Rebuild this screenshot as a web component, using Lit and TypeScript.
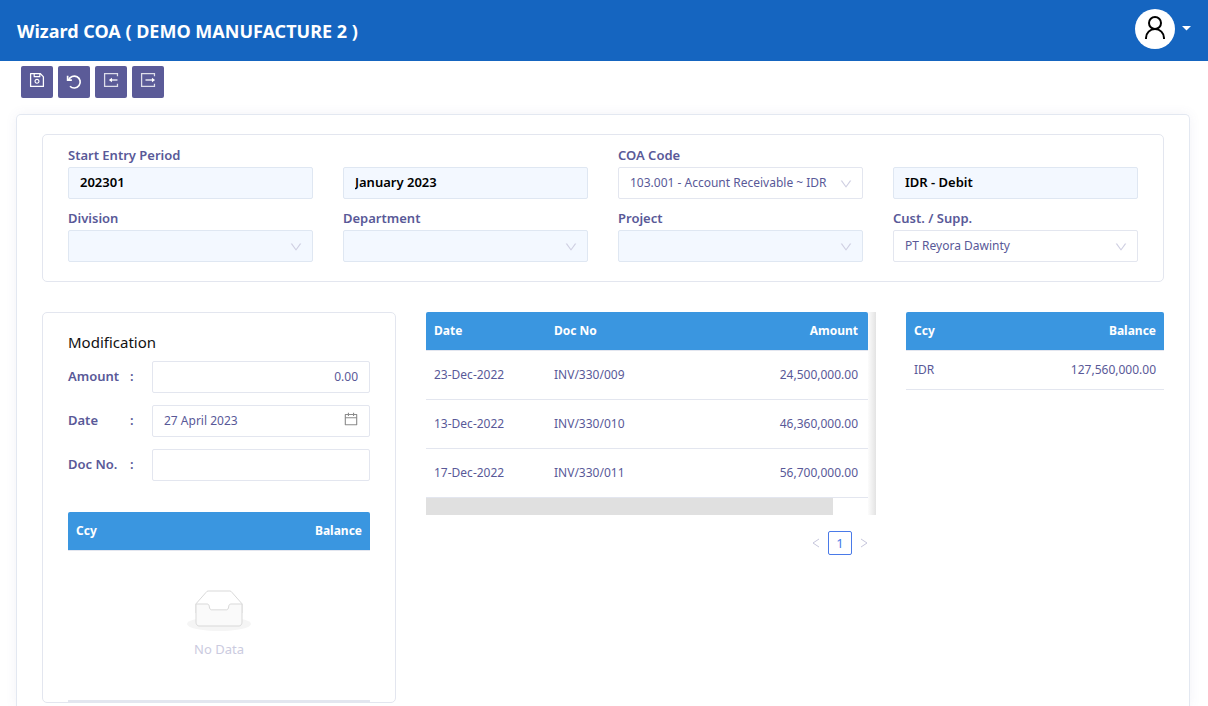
import { LitElement, html, css, svg } from "lit";
import { customElement } from "lit/decorators.js";

interface Field {
  id: string;
  label?: string;
  kind: "text" | "select";
  value: string;
  disabled?: boolean;
}

const fields: Field[] = [
  { id: "period", label: "Start Entry Period", kind: "text", value: "202301", disabled: true },
  { id: "period-name", kind: "text", value: "January 2023", disabled: true },
  { id: "coa", label: "COA Code", kind: "select", value: "103.001 - Account Receivable ~ IDR" },
  { id: "currency", kind: "text", value: "IDR - Debit", disabled: true },
  { id: "division", label: "Division", kind: "select", value: "", disabled: true },
  { id: "department", label: "Department", kind: "select", value: "", disabled: true },
  { id: "project", label: "Project", kind: "select", value: "", disabled: true },
  { id: "partner", label: "Cust. / Supp.", kind: "select", value: "PT Reyora Dawinty" },
];

const documents = [
  ["23-Dec-2022", "INV/330/009", "24,500,000.00"],
  ["13-Dec-2022", "INV/330/010", "46,360,000.00"],
  ["17-Dec-2022", "INV/330/011", "56,700,000.00"],
];

const saveIcon = svg`<path fill="currentColor" d="M893.3 293.3L730.7 130.7c-7.5-7.5-16.7-13-26.7-16V112H144c-17.7 0-32 14.3-32 32v736c0 17.7 14.3 32 32 32h736c17.7 0 32-14.3 32-32V338.5c0-17-6.7-33.2-18.7-45.2zM384 184h256v104H384V184zm456 656H184V184h136v136c0 17.7 14.3 32 32 32h320c17.7 0 32-14.3 32-32V205.8l136 136V840zM512 442c-79.5 0-144 64.5-144 144s64.5 144 144 144 144-64.5 144-144-64.5-144-144-144zm0 224c-44.2 0-80-35.8-80-80s35.8-80 80-80 80 35.8 80 80-35.8 80-80 80z"/>`;
const undoIcon = svg`<g fill="none" stroke="currentColor" stroke-width="96"><path d="M205 400A340 340 0 1 1 285 755"/><path d="M150 160v240h240"/></g>`;
const importIcon = svg`<g fill="none" stroke="currentColor" stroke-width="72"><path opacity=".8" d="M880 300V148H148v728h732V724"/><path d="M880 512H480"/></g><path fill="currentColor" d="M390 512l175-125v250z"/>`;
const exportIcon = svg`<g fill="none" stroke="currentColor" stroke-width="72"><path opacity=".8" d="M880 300V148H148v728h732V724"/><path d="M370 512H800"/></g><path fill="currentColor" d="M912 512L737 387v250z"/>`;
const downIcon = svg`<path fill="currentColor" d="M884 256h-75c-5.1 0-9.9 2.5-12.9 6.6L512 654.2 227.9 262.6c-3-4.1-7.8-6.6-12.9-6.6h-75c-6.5 0-10.3 7.4-6.5 12.7l352.6 486.1c12.8 17.6 39 17.6 51.7 0l352.6-486.1c3.9-5.3.1-12.7-6.4-12.7z"/>`;
const calendarIcon = svg`<path fill="currentColor" d="M880 184H712v-64c0-4.4-3.6-8-8-8h-56c-4.4 0-8 3.6-8 8v64H384v-64c0-4.4-3.6-8-8-8h-56c-4.4 0-8 3.6-8 8v64H144c-17.7 0-32 14.3-32 32v664c0 17.7 14.3 32 32 32h736c17.7 0 32-14.3 32-32V216c0-17.7-14.3-32-32-32zm-40 656H184V460h656v380zM184 392V256h128v48c0 4.4 3.6 8 8 8h56c4.4 0 8-3.6 8-8v-48h256v48c0 4.4 3.6 8 8 8h56c4.4 0 8-3.6 8-8v-48h128v136H184z"/>`;

const tools = [
  { name: "Save", icon: saveIcon },
  { name: "Undo", icon: undoIcon, low: true },
  { name: "Import", icon: importIcon },
  { name: "Export", icon: exportIcon },
];

@customElement("app-root")
export class AppRoot extends LitElement {
  static styles = css`
    :host {
      display: flex;
      flex-direction: column;
      min-height: 100vh;
      background: #fff;
      color: #595998;
      font: 13px/20px "Noto Sans", sans-serif;
    }
    * { box-sizing: border-box; }
    svg { display: block; }
    input, select, button { font: inherit; color: inherit; margin: 0; }
    h1, h2 { margin: 0; }
    .header {
      display: flex;
      align-items: center;
      justify-content: space-between;
      height: 61px;
      padding: 0 17px;
      background: #1565c0;
      color: #fff;
    }
    .title { font-size: 18px; line-height: 28px; font-weight: 700; }
    .account {
      display: flex;
      align-items: center;
      gap: 7px;
      padding: 0 0 4px;
      border: 0;
      background: none;
      color: #fff;
    }
    .avatar {
      display: grid;
      place-items: center;
      width: 40px;
      height: 40px;
      padding-bottom: 2px;
      border-radius: 50%;
      background: #fff;
      color: #000;
    }
    .toolbar { display: flex; gap: 5px; padding: 5px 21px 16px; }
    .tool {
      display: flex;
      justify-content: center;
      width: 32px;
      height: 32px;
      padding: 5px 0 0;
      border: 0;
      border-radius: 2px;
      background: #5b5b98;
      color: #fff;
    }
    .tool.low { padding-top: 7px; }
    .page {
      flex: 1;
      margin: 0 18px 0 16px;
      padding: 19px 25px 3px;
      border: 1px solid #e3e8f1;
      border-bottom: 0;
      border-radius: 5px 5px 0 0;
      box-shadow: 0 0 12px rgba(90, 90, 150, 0.08);
    }
    .panel { border: 1px solid #e3e6ef; border-radius: 5px; }
    .filters {
      display: grid;
      grid-template-columns: repeat(4, minmax(0, 1fr));
      gap: 7px 30px;
      padding: 8px 25px 19px;
    }
    .field { display: flex; flex-direction: column; justify-content: flex-end; }
    .label { font-weight: 600; line-height: 24px; }
    .control { position: relative; display: block; }
    .input {
      display: block;
      appearance: none;
      width: 100%;
      height: 32px;
      padding: 0 11px 2px;
      border: 1px solid #e3e6ef;
      border-radius: 2px;
      background: #fff;
      font-size: 12px;
      outline: none;
      opacity: 1;
    }
    .input:disabled { background: #f3f8ff; border-color: #dfe7f2; color: #000; font-size: 13px; font-weight: 600; }
    .select { padding: 0 27px 0 11px; }
    .number { text-align: right; }
    .mark { position: absolute; top: 10px; right: 10px; color: #cfcfe2; pointer-events: none; }
    .mark.calendar { top: 6px; right: 11px; color: #8c8c8c; }
    .columns {
      display: grid;
      grid-template-columns: minmax(0, 59fr) minmax(0, 75fr) minmax(0, 43fr);
      align-items: start;
      gap: 30px;
      margin-top: 30px;
    }
    .modification { padding: 15px 25px 0; }
    .heading { font-size: 15px; line-height: 28px; font-weight: 400; color: #111; }
    .form { display: grid; gap: 12px; margin: 5px 0 31px; }
    .row { display: grid; grid-template-columns: 62px 22px minmax(0, 1fr); align-items: center; }
    .row .label { line-height: 20px; padding-bottom: 2px; }
    .table { width: 100%; border-collapse: separate; border-spacing: 0; font-size: 12px; }
    .table th {
      height: 39px;
      padding: 0 8px;
      border-bottom: 1px solid #e3e6ef;
      background: #3a96e0;
      background-clip: padding-box;
      color: #fff;
      font-weight: 700;
      text-align: left;
    }
    .table td { height: 39px; padding: 0 8px; border-bottom: 1px solid #e3e6ef; }
    .table th:first-child { border-top-left-radius: 2px; }
    .table th:last-child { border-top-right-radius: 2px; }
    .table .end { text-align: right; }
    .table .empty { height: 151px; padding-bottom: 2px; border-bottom-width: 2px; color: #cbcbe0; font-size: 13px; }
    .blank { display: flex; flex-direction: column; align-items: center; gap: 8px; }
    .scroller { padding-right: 8px; background: linear-gradient(to left, #e3e3e3, #fff 9px); }
    .documents { table-layout: fixed; background: #fff; }
    .documents td { height: 49px; }
    .documents th { border-radius: 0; }
    .documents th, .documents td { padding-right: 10px; }
    .wide { width: 120px; }
    .track { height: 17px; background: #fff; }
    .thumb { width: 92%; height: 100%; background: #e0e0e0; }
    .pages { display: flex; justify-content: flex-end; align-items: center; margin-top: 16px; }
    .step { display: grid; place-items: center; width: 24px; height: 24px; padding: 0; border: 0; background: none; color: #c6c6dc; }
    .current { border: 1px solid #4a7ae8; border-radius: 2px; color: #4a7ae8; }
  `;

  icon(shape: unknown, size: number) {
    return html`<svg width=${size} height=${size} viewBox="0 0 1024 1024" aria-hidden="true">${shape}</svg>`;
  }

  field(f: Field) {
    return html`<div class="field">
      ${f.label ? html`<label class="label" for=${f.id}>${f.label}</label>` : ""}
      ${f.kind === "text"
        ? html`<input class="input" id=${f.id} aria-label=${f.label ?? f.id} .value=${f.value} ?disabled=${f.disabled} />`
        : html`<span class="control">
            <select class="input select" id=${f.id} ?disabled=${f.disabled}><option>${f.value}</option></select>
            <span class="mark">${this.icon(downIcon, 14)}</span>
          </span>`}
    </div>`;
  }

  render() {
    return html`
      <header class="header">
        <h1 class="title">Wizard COA ( DEMO MANUFACTURE 2 )</h1>
        <button class="account" aria-label="Account">
          <span class="avatar">
            <svg width="24" height="24" viewBox="0 0 24 24" fill="none" stroke="currentColor" stroke-width="2">
              <circle cx="12" cy="7" r="6" /><path d="M3 23v-1a9 9 0 0 1 18 0v1" />
            </svg>
          </span>
          <svg width="9" height="5" viewBox="0 0 9 5"><path fill="currentColor" d="M0 0h9L4.5 4.5z" /></svg>
        </button>
      </header>
      <nav class="toolbar" aria-label="Actions">
        ${tools.map((t) => html`<button class="tool ${t.low ? "low" : ""}" aria-label=${t.name}>${this.icon(t.icon, 18)}</button>`)}
      </nav>
      <main class="page">
        <section class="panel filters">${fields.map((f) => this.field(f))}</section>
        <div class="columns">
          <section class="panel modification">
            <h2 class="heading">Modification</h2>
            <div class="form">
              <div class="row">
                <label class="label" for="amount">Amount</label><span class="label">:</span>
                <input class="input number" id="amount" .value=${"0.00"} />
              </div>
              <div class="row">
                <label class="label" for="date">Date</label><span class="label">:</span>
                <span class="control">
                  <input class="input" id="date" .value=${"27 April 2023"} />
                  <span class="mark calendar">${this.icon(calendarIcon, 16)}</span>
                </span>
              </div>
              <div class="row">
                <label class="label" for="doc">Doc No.</label><span class="label">:</span>
                <input class="input" id="doc" />
              </div>
            </div>
            <table class="table">
              <thead><tr><th>Ccy</th><th class="end">Balance</th></tr></thead>
              <tbody><tr><td class="empty" colspan="2">
                <div class="blank">
                  <svg width="64" height="41" viewBox="0 0 64 41">
                    <g transform="translate(0 1)" fill="none" fill-rule="evenodd">
                      <ellipse fill="#f5f5f5" cx="32" cy="33" rx="32" ry="7" />
                      <g fill-rule="nonzero" stroke="#d9d9d9">
                        <path d="M55 12.76L44.854 1.258C44.367.474 43.656 0 42.907 0H21.093c-.749 0-1.46.474-1.947 1.257L9 12.761V22h46v-9.24z" fill="#fff" />
                        <path d="M41.613 15.931c0-1.605.994-2.93 2.227-2.931H55v18.137C55 33.26 53.68 35 52.05 35h-40.1C10.32 35 9 33.259 9 31.137V13h11.16c1.233 0 2.227 1.323 2.227 2.928v.022c0 1.605 1.005 2.901 2.237 2.901h14.752c1.232 0 2.237-1.308 2.237-2.913v-.007z" fill="#fafafa" />
                      </g>
                    </g>
                  </svg>
                  <span>No Data</span>
                </div>
              </td></tr></tbody>
            </table>
          </section>
          <section>
            <div class="scroller">
              <table class="table documents">
                <thead><tr><th class="wide">Date</th><th class="wide">Doc No</th><th class="end">Amount</th></tr></thead>
                <tbody>
                  ${documents.map((d) => html`<tr><td>${d[0]}</td><td>${d[1]}</td><td class="end">${d[2]}</td></tr>`)}
                </tbody>
              </table>
              <div class="track"><div class="thumb"></div></div>
            </div>
            <nav class="pages" aria-label="Pages">
              <button class="step" aria-label="Previous">
                <svg width="8" height="10" viewBox="0 0 8 10" fill="none" stroke="currentColor"><path d="M7 1L1 5l6 4" /></svg>
              </button>
              <button class="step current">1</button>
              <button class="step" aria-label="Next">
                <svg width="8" height="10" viewBox="0 0 8 10" fill="none" stroke="currentColor"><path d="M1 1l6 4-6 4" /></svg>
              </button>
            </nav>
          </section>
          <table class="table">
            <thead><tr><th>Ccy</th><th class="end">Balance</th></tr></thead>
            <tbody><tr><td>IDR</td><td class="end">127,560,000.00</td></tr></tbody>
          </table>
        </div>
      </main>
    `;
  }
}
